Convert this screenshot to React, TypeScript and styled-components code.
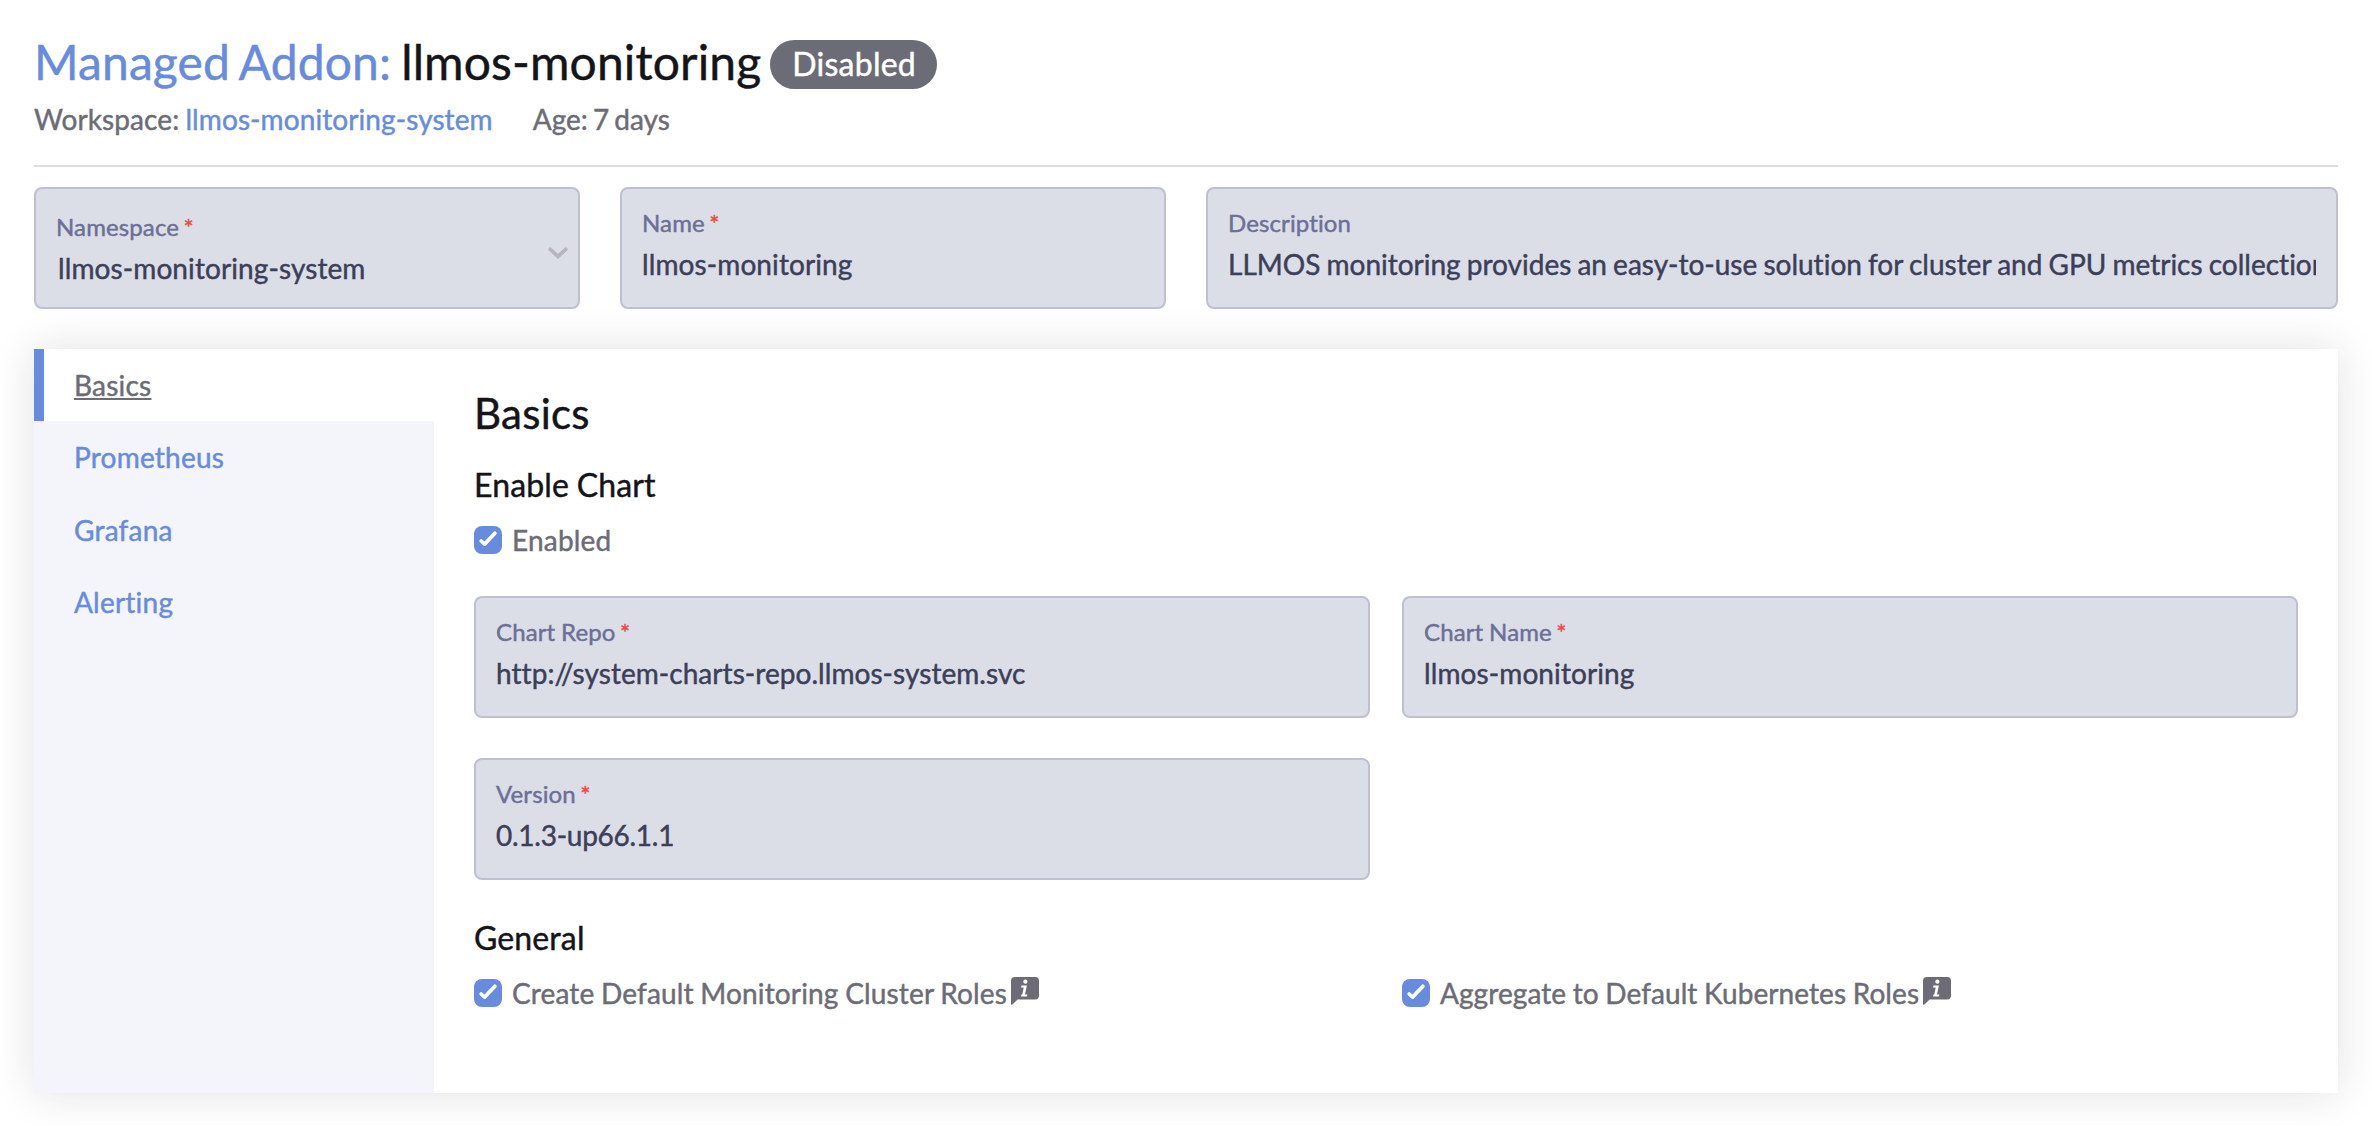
import React from "react";
import styled, { createGlobalStyle } from "styled-components";

const primary = "#678bdd";
const muted = "#6c6c76";
const ink = "#141419";

const Global = createGlobalStyle`
  * { box-sizing: border-box; }
  body {
    margin: 0;
    background: #fff;
    color: ${ink};
    font-family: Lato, "Open Sans", sans-serif;
    font-size: 28px;
    font-variant-ligatures: none;
    -webkit-text-stroke: 0.45px;
    overflow: hidden;
  }
`;

const Page = styled.main`
  height: 1126px;
  padding: 34px 34px 0;
`;

const Header = styled.header`
  height: 133px;
  border-bottom: 2px solid #dcdee7;
`;

const TitleRow = styled.div`
  display: flex;
  align-items: center;
  height: 60px;
`;

const Title = styled.h1`
  margin: 0 0 4px;
  font-size: 48px;
  font-weight: 400;
  line-height: 58px;
  letter-spacing: 0.13px;
  word-spacing: -2.3px;
  white-space: pre;
`;

const TitleLink = styled.a`
  color: ${primary};
`;

const Badge = styled.span`
  display: flex;
  align-items: center;
  height: 49px;
  margin: 1px 0 0 9px;
  padding: 0 21px 2px 22px;
  border-radius: 25px;
  background: ${muted};
  color: #fff;
  font-size: 32px;
  letter-spacing: 0.25px;
`;

const Meta = styled.div`
  display: flex;
  gap: 40px;
  margin-top: 8px;
  color: ${muted};
  line-height: 34px;
`;

const MetaItem = styled.span<{ $tracking: number; $space: number }>`
  letter-spacing: ${(p) => p.$tracking}px;
  word-spacing: ${(p) => p.$space}px;
`;

const MetaLink = styled.a`
  color: ${primary};
`;

const NameRow = styled.section`
  display: grid;
  grid-template-columns: 546px 546px minmax(0, 1fr);
  gap: 40px;
  margin-top: 20px;
`;

const FieldBox = styled.div<{ $select?: boolean }>`
  display: flex;
  align-items: flex-start;
  min-width: 0;
  height: 122px;
  padding: ${(p) => (p.$select ? "21px 10px 0 20px" : "17px 20px 0")};
  border: 2px solid #bebfd2;
  border-radius: 8px;
  background: #dcdee7;
`;

const FieldText = styled.div`
  flex: 1;
  min-width: 0;
`;

const FieldLabel = styled.div`
  color: #6b7096;
  font-size: 24px;
  line-height: 33px;
  letter-spacing: 0.12px;
  word-spacing: -0.5px;
`;

const Required = styled.span`
  margin-left: -1.3px;
  color: #ee4a42;
`;

const FieldValue = styled.div<{ $select?: boolean; $tracking: number }>`
  margin-top: 7px;
  padding-left: ${(p) => (p.$select ? 2 : 0)}px;
  overflow: hidden;
  color: #3b3f58;
  line-height: 36px;
  letter-spacing: ${(p) => p.$tracking}px;
  word-spacing: -1.05px;
  white-space: nowrap;
`;

const Chevron = styled.svg`
  flex: none;
  width: 20px;
  height: 12px;
  margin-top: 37px;
`;

const Card = styled.section`
  display: flex;
  height: 744px;
  margin-top: 40px;
  background: #fff;
  box-shadow: 0 0 40px rgba(20, 20, 50, 0.13);
`;

const Tabs = styled.nav`
  flex: 0 0 400px;
  background: #f4f5fa;
`;

const Tab = styled.a<{ $active?: boolean }>`
  display: block;
  height: 72.33px;
  padding: 19px 0 0 ${(p) => (p.$active ? 30 : 40)}px;
  border-left: ${(p) => (p.$active ? `10px solid ${primary}` : "0")};
  background: ${(p) => (p.$active ? "#fff" : "transparent")};
  color: ${(p) => (p.$active ? muted : primary)};
  line-height: 34px;
  letter-spacing: 0.22px;
  text-decoration: ${(p) => (p.$active ? "underline" : "none")};
`;

const Content = styled.div`
  flex: 1;
  padding: 39px 40px 0;
`;

const PanelTitle = styled.h2`
  margin: 0;
  font-size: 42px;
  font-weight: 400;
  line-height: 50px;
  letter-spacing: 0.25px;
`;

const GroupTitle = styled.h3<{ $top: number }>`
  margin: ${(p) => p.$top}px 0 0;
  font-size: 32px;
  font-weight: 400;
  line-height: 39px;
  letter-spacing: 0.13px;
  word-spacing: -0.6px;
`;

const Grid = styled.div<{ $top: number }>`
  display: grid;
  grid-template-columns: 1fr 1fr;
  gap: 40px 32px;
  margin-top: ${(p) => p.$top}px;
`;

const CheckRow = styled.label<{ $tracking: number }>`
  display: flex;
  align-items: center;
  height: 34px;
  color: ${muted};
  letter-spacing: ${(p) => p.$tracking}px;
  word-spacing: -0.7px;
`;

const Box = styled.span`
  display: flex;
  flex: none;
  width: 28px;
  height: 28px;
  margin-right: 10px;
  border-radius: 8px;
  background: ${primary};
`;

const InfoSvg = styled.svg`
  width: 28px;
  height: 28px;
  margin: -4px 0 0 4px;
`;

function Info() {
  return (
    <InfoSvg viewBox="0 0 28 28">
      <path d="M4 0H24Q28 0 28 4V18.4Q28 22.4 24 22.4H6.6L1.4 27.4Q0 28.6 0 26.6V4Q0 0 4 0Z" fill={muted} />
      <circle cx="14.4" cy="4.7" r="2.1" fill="#fff" />
      <path d="M10.4 8.4H15.9L14 17.6H16.4L15.9 19.6H10.1L10.4 17.6H11.3L12.7 10.4H10Z" fill="#fff" />
    </InfoSvg>
  );
}

interface CheckProps {
  label: string;
  tracking: number;
  info?: boolean;
}

function Check({ label, tracking, info }: CheckProps) {
  return (
    <CheckRow $tracking={tracking}>
      <Box>
        <svg width="28" height="28" viewBox="0 0 28 28" fill="none">
          <path
            d="M7.2 15 L10.6 18.1 L20.9 7.3"
            stroke="#fff"
            strokeWidth="3.7"
            strokeLinecap="round"
            strokeLinejoin="round"
          />
        </svg>
      </Box>
      {label}
      {info && <Info />}
    </CheckRow>
  );
}

interface FieldProps {
  label: string;
  value: string;
  required?: boolean;
  select?: boolean;
  tracking?: number;
}

function Field({ label, value, required, select, tracking = 0.1 }: FieldProps) {
  return (
    <FieldBox $select={select}>
      <FieldText>
        <FieldLabel>
          {label} {required && <Required>*</Required>}
        </FieldLabel>
        <FieldValue $select={select} $tracking={tracking}>
          {value}
        </FieldValue>
      </FieldText>
      {select && (
        <Chevron viewBox="0 0 20 12" fill="none">
          <path d="M2.3 2.3 L10 9.4 L17.7 2.3" stroke="#b6b6c0" strokeWidth="3.8" strokeLinecap="round" />
        </Chevron>
      )}
    </FieldBox>
  );
}

const tabs = ["Basics", "Prometheus", "Grafana", "Alerting"];

export default function App() {
  return (
    <>
      <Global />
      <Page>
        <Header>
          <TitleRow>
            <Title>
              <TitleLink>Managed Addon:</TitleLink> llmos-monitoring
            </Title>
            <Badge>Disabled</Badge>
          </TitleRow>
          <Meta>
            <MetaItem $tracking={0.09} $space={-1.1}>
              Workspace: <MetaLink>llmos-monitoring-system</MetaLink>
            </MetaItem>
            <MetaItem $tracking={0} $space={-2}>
              Age: 7 days
            </MetaItem>
          </Meta>
        </Header>
        <NameRow>
          <Field label="Namespace" value="llmos-monitoring-system" required select />
          <Field label="Name" value="llmos-monitoring" required />
          <Field
            label="Description"
            value="LLMOS monitoring provides an easy-to-use solution for cluster and GPU metrics collection"
            tracking={0}
          />
        </NameRow>
        <Card>
          <Tabs>
            {tabs.map((name, i) => (
              <Tab key={name} $active={i === 0}>
                {name}
              </Tab>
            ))}
          </Tabs>
          <Content>
            <PanelTitle>Basics</PanelTitle>
            <GroupTitle $top={27}>Enable Chart</GroupTitle>
            <Grid $top={19}>
              <Check label="Enabled" tracking={0.2} />
            </Grid>
            <Grid $top={39}>
              <Field
                label="Chart Repo"
                value="http://system-charts-repo.llmos-system.svc"
                required
                tracking={0.05}
              />
              <Field label="Chart Name" value="llmos-monitoring" required />
              <Field label="Version" value="0.1.3-up66.1.1" required tracking={-0.26} />
            </Grid>
            <GroupTitle $top={38}>General</GroupTitle>
            <Grid $top={19}>
              <Check label="Create Default Monitoring Cluster Roles" tracking={0.15} info />
              <Check label="Aggregate to Default Kubernetes Roles" tracking={0.08} info />
            </Grid>
          </Content>
        </Card>
      </Page>
    </>
  );
}
